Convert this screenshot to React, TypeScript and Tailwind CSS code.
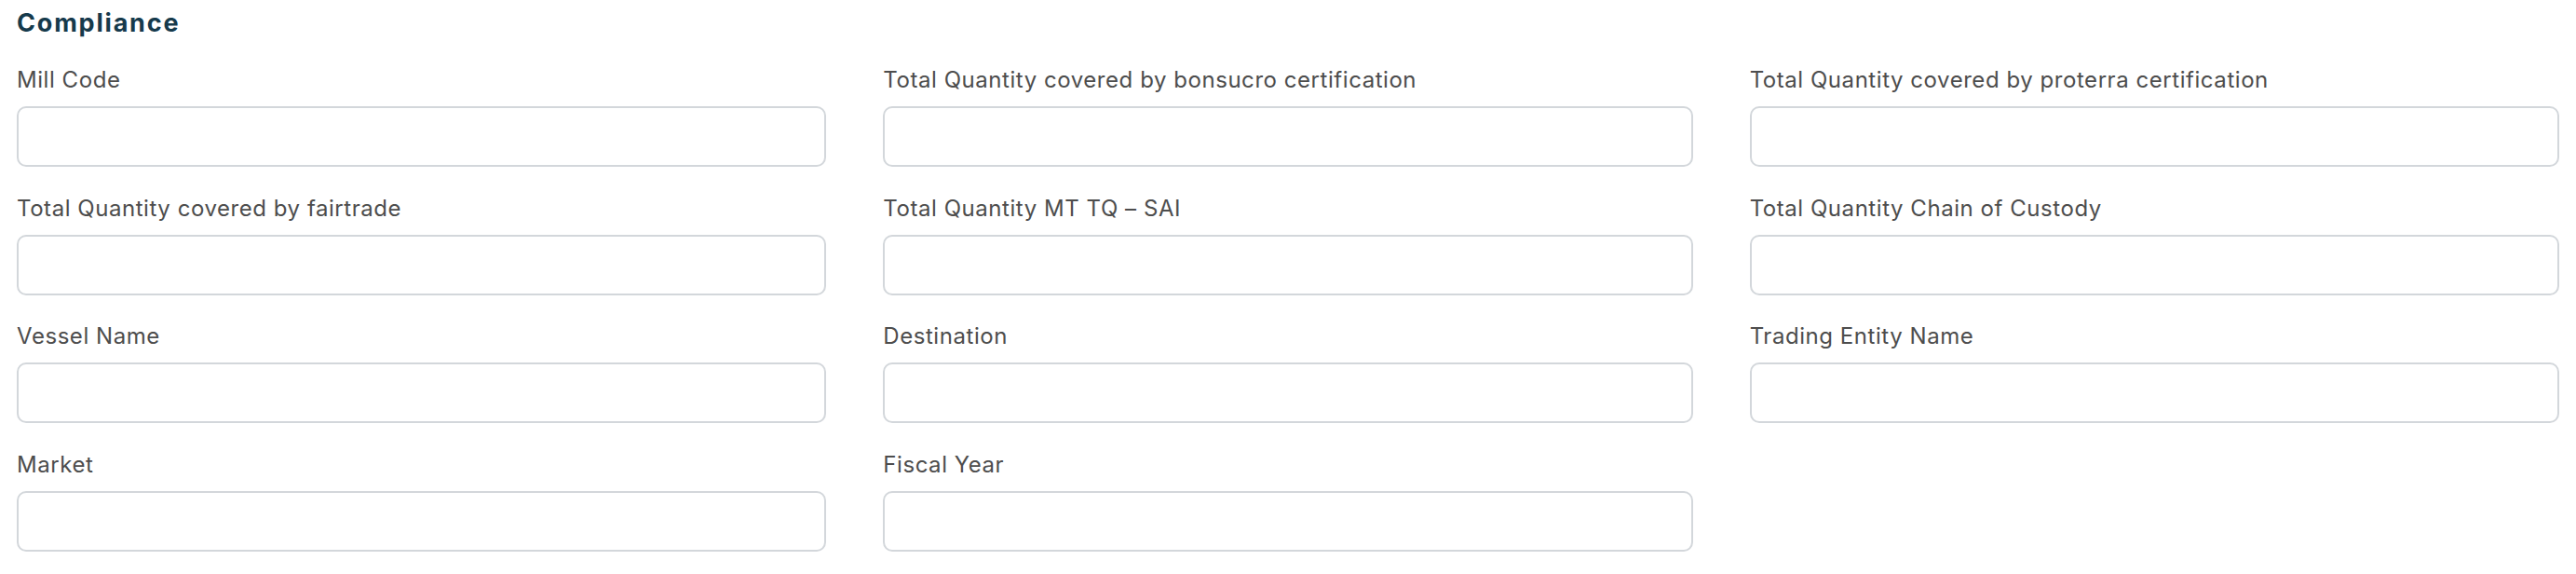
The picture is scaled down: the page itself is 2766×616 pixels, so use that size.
import React from "react";

const FIELDS = [
  "Mill Code",
  "Total Quantity covered by bonsucro certification",
  "Total Quantity covered by proterra certification",
  "Total Quantity covered by fairtrade",
  "Total Quantity MT TQ – SAI",
  "Total Quantity Chain of Custody",
  "Vessel Name",
  "Destination",
  "Trading Entity Name",
  "Market",
  "Fiscal Year",
];

export default function App() {
  return (
    <div className="min-h-[616px] bg-white px-[18px] pt-[7px] font-['Inter',sans-serif]">
      <h2 className="text-[27px] leading-[36px] font-bold text-[#163a4c] tracking-[1.8px]">
        Compliance
      </h2>
      <div className="mt-[27px] grid grid-cols-3 gap-x-[61px] gap-y-[28.5px]">
        {FIELDS.map(label => (
          <div key={label} className="flex flex-col">
            <label className="text-[24px] leading-[32px] tracking-[0.55px] text-[#4d4d4d]">{label}</label>
            <input
              type="text"
              className="mt-[12px] h-[65px] w-full rounded-[10px] border-2 border-[#d3d7db] bg-white px-4 text-[24px] outline-none"
            />
          </div>
        ))}
      </div>
    </div>
  );
}
